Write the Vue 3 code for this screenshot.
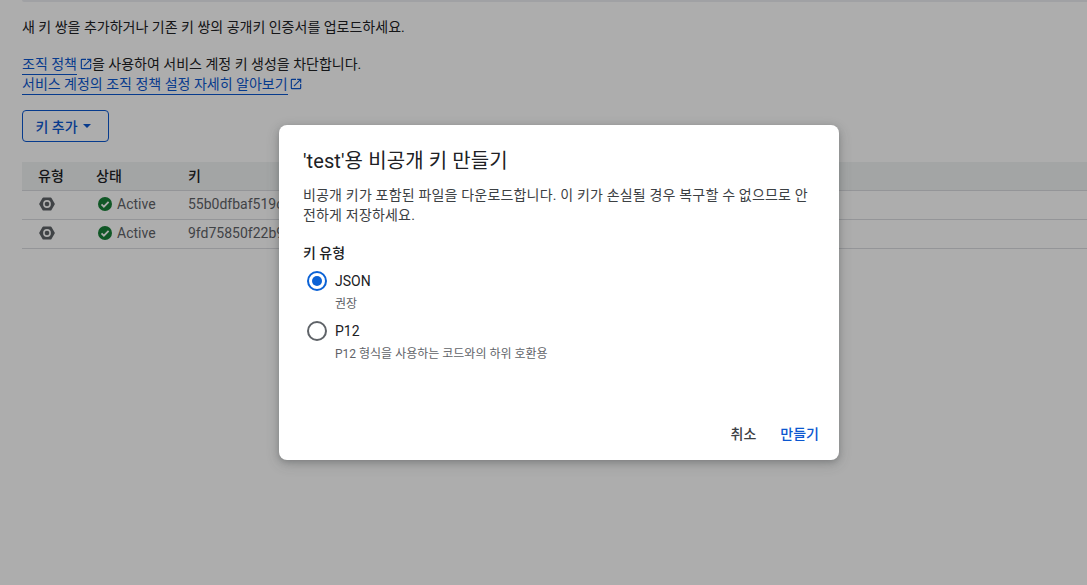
<script setup>
const rows = [
  { key: '55b0dfbaf519c3a1e07d' },
  { key: '9fd75850f22b94c6ab13' },
]
</script>

<template>
  <div class="page">
    <div class="topline"></div>
    <p class="intro">새 키 쌍을 추가하거나 기존 키 쌍의 공개키 인증서를 업로드하세요.</p>
    <div class="policy">
      <div class="pline">
        <a class="link">조직 정책</a>
        <svg class="ext" viewBox="0 0 24 24"><path d="M19 19H5V5h7V3H5a2 2 0 0 0-2 2v14a2 2 0 0 0 2 2h14a2 2 0 0 0 2-2v-7h-2v7zM14 3v2h3.59l-9.83 9.83 1.41 1.41L19 6.41V10h2V3h-7z"/></svg>
        <span>을 사용하여 서비스 계정 키 생성을 차단합니다.</span>
      </div>
      <div class="pline">
        <a class="link">서비스 계정의 조직 정책 설정 자세히 알아보기</a>
        <svg class="ext second" viewBox="0 0 24 24"><path d="M19 19H5V5h7V3H5a2 2 0 0 0-2 2v14a2 2 0 0 0 2 2h14a2 2 0 0 0 2-2v-7h-2v7zM14 3v2h3.59l-9.83 9.83 1.41 1.41L19 6.41V10h2V3h-7z"/></svg>
      </div>
    </div>
    <button class="addkey">키 추가<span class="caret"></span></button>
    <div class="table">
      <div class="row head">
        <div class="c1">유형</div>
        <div class="c2">상태</div>
        <div class="c3">키</div>
      </div>
      <div v-for="r in rows" :key="r.key" class="row">
        <div class="c1">
          <svg class="hex" viewBox="0 0 16 14"><path fill-rule="evenodd" d="M4.400 0.500h7.200a1 1 0 0 1 .87.500l3.200 5.500a1 1 0 0 1 0 1l-3.200 5.500a1 1 0 0 1-.87.500H4.400a1 1 0 0 1-.87-.500L.33 7.500a1 1 0 0 1 0-1L3.530 1a1 1 0 0 1 .87-.500zM8 3.100a3.900 3.900 0 1 0 0 7.800 3.900 3.900 0 0 0 0-7.800z"/><circle cx="8" cy="7" r="2.300"/></svg>
        </div>
        <div class="c2 status">
          <svg class="check" viewBox="0 0 14 14"><circle cx="7" cy="7" r="7" fill="#188038"/><path d="M3.500 7.300l2.400 2.400 4.700-4.800" fill="none" stroke="#fff" stroke-width="1.800"/></svg>
          <span>Active</span>
        </div>
        <div class="c3 mono">{{ r.key }}</div>
      </div>
    </div>

    <div class="scrim">
      <div class="dialog">
        <h2>'test'용 비공개 키 만들기</h2>
        <p class="desc">비공개 키가 포함된 파일을 다운로드합니다. 이 키가 손실될 경우 복구할 수 없으므로 안전하게 저장하세요.</p>
        <div class="label">키 유형</div>
        <div class="option">
          <span class="radio on"></span>
          <div>
            <div class="oname">JSON</div>
            <div class="ohint">권장</div>
          </div>
        </div>
        <div class="option">
          <span class="radio"></span>
          <div>
            <div class="oname">P12</div>
            <div class="ohint">P12 형식을 사용하는 코드와의 하위 호환용</div>
          </div>
        </div>
        <div class="actions">
          <button class="act cancel">취소</button>
          <button class="act create">만들기</button>
        </div>
      </div>
    </div>
  </div>
</template>

<style>
html, body { margin: 0; background: #fff; overflow: hidden; }
</style>

<style scoped>
.page {
  position: relative;
  width: 1087px;
  height: 585px;
  overflow: hidden;
  padding: 0 0 0 22px;
  box-sizing: border-box;
  font-family: Roboto, "Noto Sans CJK KR", sans-serif;
  font-size: 14px;
  color: #202124;
}
.topline { height: 2px; background: #eceef2; border-bottom-left-radius: 2px; }
.intro { margin: 15px 0 0; line-height: 20px; height: 20px; }
.policy { margin-top: 17px; }
.pline { display: flex; align-items: flex-start; height: 21px; line-height: 20px; }
.pline + .pline { margin-top: -1px; }
.link { color: #0b57d0; border-bottom: 1px solid #0b57d0; height: 20px; }
.ext { width: 14px; height: 14px; fill: #0b57d0; margin: 3px -1px 0 2px; flex: none; }
.second { margin-left: 1px; }
.addkey {
  display: flex; align-items: center; justify-content: center;
  width: 87px; height: 32px; margin-top: 15px; padding: 0 5px 0 0;
  background: #fff; border: 1px solid #0b57d0; border-radius: 4px;
  color: #0b57d0; font: 500 14px Roboto, "Noto Sans CJK KR", sans-serif;
}
.caret {
  width: 0; height: 0; margin-left: 5px;
  border-left: 4.500px solid transparent; border-right: 4.500px solid transparent;
  border-top: 4.500px solid #0b57d0;
}
.table { margin-top: 20px; }
.row {
  display: flex; align-items: center; height: 26px; padding-bottom: 2px;
  border-bottom: 1px solid #dadce0;
}
.row.head { background: #f1f3f4; font-weight: 500; }
.c1 { width: 58px; padding-left: 16px; display: flex; align-items: center; }
.c2 { width: 92px; display: flex; align-items: center; }
.c3 { flex: 1; }
.status span, .mono { color: #5f6368; }
.status { padding-left: 2px; width: 90px; }
.hex { width: 16px; height: 14px; fill: #5f6368; margin-left: 1px; }
.check { width: 14px; height: 14px; margin-right: 5px; }
.scrim {
  position: absolute; inset: 0;
  background: rgba(0, 0, 0, .32);
  padding: 125px 0 0 279px;
  box-sizing: border-box;
}
.dialog {
  width: 560px; height: 335px; box-sizing: border-box;
  background: #fff; border-radius: 8px;
  box-shadow: 0 2px 6px rgba(60,64,67,.3), 0 4px 14px rgba(60,64,67,.2);
  padding: 24px 24px 0;
  position: relative;
  display: flex; flex-direction: column;
}
h2 { margin: 0; font-size: 20px; font-weight: 400; line-height: 24px; color: #202124; letter-spacing: .1px; }
.desc { margin: 12px 0 0; line-height: 20px; color: #3c4043; font-size: 14px; letter-spacing: .18px; max-width: 512px; }
.label { margin-top: 18px; font-weight: 500; line-height: 20px; }
.option { display: flex; align-items: flex-start; margin-left: 4px; margin-top: 8px; height: 42px; }
.radio {
  width: 20px; height: 20px; box-sizing: border-box;
  border: 2px solid #5f6368; border-radius: 50%; margin-right: 8px; flex: none;
  position: relative;
}
.radio.on { border-color: #0b62d6; }
.radio.on::after {
  content: ""; position: absolute; left: 3px; top: 3px;
  width: 10px; height: 10px; border-radius: 50%; background: #0b62d6;
}
.oname { line-height: 20px; font-size: 14px; color: #202124; }
.ohint { font-size: 12px; line-height: 16px; margin-top: 5px; color: #5f6368; }
.actions { margin-top: auto; display: flex; justify-content: flex-end; gap: 24px; margin-right: -4px; padding-bottom: 16px; }
.act { border: 0; background: none; padding: 0; font: 500 14px/20px Roboto, "Noto Sans CJK KR", sans-serif; }
.cancel { color: #3c4043; }
.create { color: #0b57d0; }
</style>
